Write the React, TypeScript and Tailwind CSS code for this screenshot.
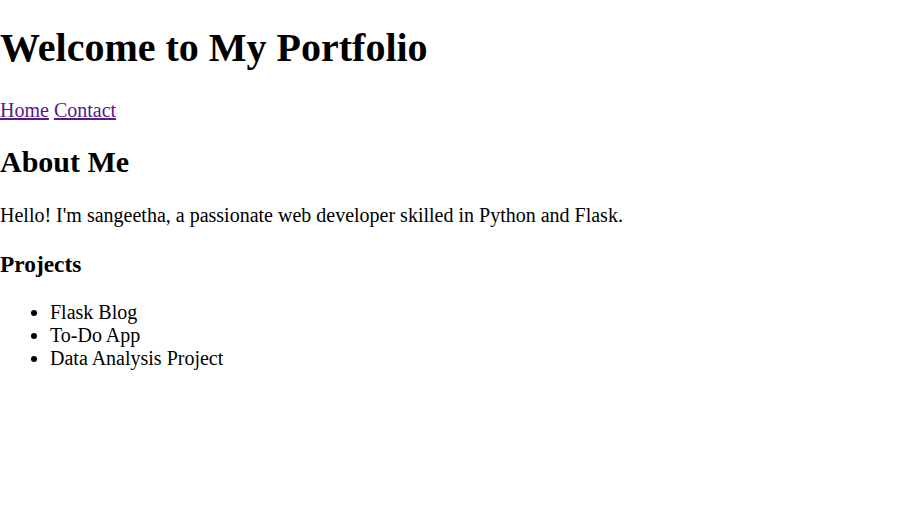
import React from "react";

export default function App() {
  return (
    <div className="flow-root bg-white text-black text-[20px] leading-[1.15] font-['Liberation_Serif',serif]">
      <header>
        <h1 className="text-[40px] font-bold leading-[1.15] mt-[24.6px] mb-[28.6px]">Welcome to My Portfolio</h1>
        <nav>
          <a href="#" className="text-[#551a8b] underline">Home</a>{" "}
          <a href="#" className="text-[#551a8b] underline">Contact</a>
        </nav>
      </header>
      <section>
        <h2 className="text-[30px] font-bold leading-[1.15] mt-[23px] mb-[23.9px]">About Me</h2>
        <p className="my-[20px]">Hello! I'm sangeetha, a passionate web developer skilled in Python and Flask.</p>
        <h3 className="text-[23.4px] font-bold leading-[1.15] mt-[24px] mb-[24px]">Projects</h3>
        <ul className="list-disc pl-[50px] my-[20px]">
          <li>Flask Blog</li>
          <li>To-Do App</li>
          <li>Data Analysis Project</li>
        </ul>
      </section>
    </div>
  );
}
